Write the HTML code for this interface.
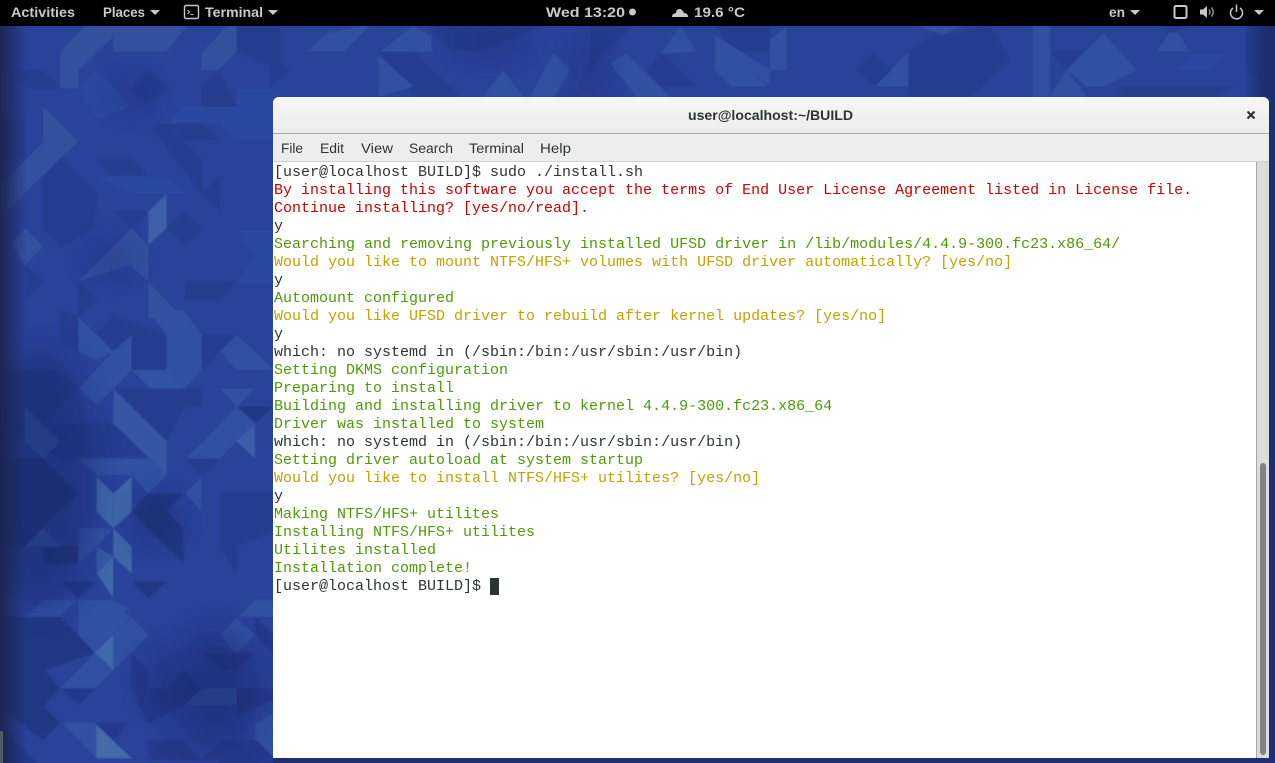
<!DOCTYPE html>
<html><head><meta charset="utf-8"><title>Terminal</title>
<style>
html,body{margin:0;padding:0;background:#000;}
#s{position:relative;width:1275px;height:763px;overflow:hidden;background:#000;}
svg{position:absolute;left:0;top:0;}
pre{position:absolute;left:274px;top:164px;margin:0;font:15px/18px "Liberation Mono",monospace;color:#2e3436;white-space:pre;}
.r{color:#cc0000}.g{color:#4e9a06}.y{color:#c4a000}
#win{position:absolute;left:273px;top:97px;width:996px;height:661px;background:#fff;border-radius:6px 6px 0 0;overflow:hidden;}
#tb{position:absolute;left:0;top:0;width:996px;height:36px;background:linear-gradient(#f6f6f6,#ededed);border-bottom:1px solid #a9a9a9;}
#mb{position:absolute;left:0;top:37px;width:996px;height:27px;background:#ededed;border-bottom:1px solid #cfcfcf;}
#sbb{position:absolute;left:983px;top:65px;width:1px;height:596px;background:#a8a8a8;}
#sb{position:absolute;left:984px;top:65px;width:12px;height:596px;background:#dcdcdc;}
#th{position:absolute;left:3px;top:301px;width:6px;height:292px;border-radius:3px;background:#808484;}
</style></head><body><div id="s">
<svg width="1275" height="763" viewBox="0 0 1275 763" xmlns="http://www.w3.org/2000/svg">
<defs>
<linearGradient id="lf" x1="0" x2="1" y1="0" y2="0"><stop offset="0" stop-color="#1b2650"/><stop offset="1" stop-color="#1b2650" stop-opacity="0"/></linearGradient>
<linearGradient id="rf" x1="0" x2="1" y1="0" y2="0"><stop offset="0" stop-color="#1e2d6e" stop-opacity="0"/><stop offset=".6" stop-color="#1e2d6e" stop-opacity=".9"/><stop offset="1" stop-color="#1e2d6e"/></linearGradient>
<filter id="b"><feGaussianBlur stdDeviation="14"/></filter>
<filter id="sf" x="-2%" y="-2%" width="104%" height="104%"><feGaussianBlur stdDeviation="0.7"/></filter>
</defs>
<rect x="0" y="26" width="1275" height="737" fill="#29429a"/>
<g opacity=".62" filter="url(#sf)">
<!-- left upper -->
<g transform="translate(0,20) scale(.33333)">
<g fill="#3a5aa4">
<polygon points="180,95 255,18 560,18 500,95 340,95 340,50 235,150 235,205 180,205"/>
<polygon points="0,500 130,365 180,415 50,545 0,600"/>
<polygon points="130,260 235,365 180,415 130,365"/>
<polygon points="605,100 680,18 710,18 710,95 655,150 605,150"/>
<polygon points="340,680 395,625 445,680 445,785 390,735 235,785"/>
<polygon points="445,785 550,895 445,895"/>
<polygon points="0,150 25,150 25,270 0,300"/>
<polygon points="30,670 75,625 130,680 75,735"/>
</g>
<g fill="#2f4ea6">
<polygon points="500,310 555,260 710,260 710,205 840,205 840,360 710,360 655,310"/>
<polygon points="710,630 840,630 840,790 710,790 760,710"/>
<polygon points="235,205 290,150 395,260 290,300"/>
<polygon points="290,470 500,470 555,520 395,520"/>
</g>
<g fill="#233a89">
<polygon points="290,415 395,415 445,468 340,468"/>
<polygon points="80,205 180,205 130,150 50,150"/>
<polygon points="605,205 655,150 710,260 605,260"/>
<polygon points="500,310 605,310 655,360 555,360"/>
<polygon points="500,625 555,575 605,625 555,675"/>
<polygon points="605,520 660,470 660,570"/>
<polygon points="710,18 840,18 840,150 710,95"/>
<polygon points="235,785 290,840 235,895"/>
<polygon points="75,735 130,785 75,840"/>
<polygon points="555,785 710,785 660,840 555,840"/>
<polygon points="395,205 445,150 500,205 445,255"/>
<polygon points="130,470 180,415 290,520 285,625 180,680 130,625"/>
<polygon points="345,575 445,575 395,625"/>
<polygon points="0,300 75,300 75,415 0,415"/>
<polygon points="455,320 500,310 605,420 605,520"/>
</g>
<g fill="#4a72b0"><polygon points="445,575 500,520 500,625 445,675"/></g>
<g fill="#2a429a"><polygon points="340,50 340,150 238,150"/></g>
</g>
<!-- left lower -->
<g transform="translate(0,310) scale(.33333)">
<g fill="#233a89">
<polygon points="0,180 180,180 235,235 130,340 235,340 340,340 445,445 180,445 75,395 0,395"/>
<polygon points="180,0 235,20 235,130 180,75"/>
<polygon points="340,20 500,75 500,180 395,180 340,125 290,70"/>
<polygon points="605,75 710,75 660,125 605,180"/>
<polygon points="555,290 605,290 605,235 445,235 340,235 500,395"/>
<polygon points="660,550 820,550 820,660 710,710 710,790 660,710"/>
<polygon points="555,445 660,445 605,500"/>
</g>
<g fill="#1f3278">
<polygon points="0,445 130,445 235,550 130,650 75,710 0,710"/>
<polygon points="395,605 445,550 550,550 500,605 550,655 550,760 445,655"/>
<polygon points="395,815 500,815 445,865"/>
<polygon points="180,815 285,815 235,865"/>
<polygon points="130,760 235,760 180,710"/>
<polygon points="710,290 820,290 765,340"/>
<polygon points="130,710 235,710 235,760 130,760"/>
</g>
<g fill="#385aa8">
<polygon points="445,0 550,0 605,75 500,75"/>
<polygon points="500,75 605,75 605,180 555,235 500,180"/>
<polygon points="660,125 710,75 765,125 820,180 710,180"/>
<polygon points="235,235 340,125 395,75 395,180 340,235 290,285"/>
<polygon points="75,290 180,395 130,445 75,395"/>
<polygon points="235,445 445,445 390,495 290,495"/>
<polygon points="395,495 445,445 500,495 445,550"/>
<polygon points="235,655 340,655 290,710 235,760"/>
<polygon points="660,235 765,235 710,290"/>
<polygon points="710,290 765,340 710,395 610,395"/>
<polygon points="555,445 610,395 710,395 660,445"/>
<polygon points="605,500 555,550 605,605"/>
<polygon points="75,710 130,655 180,710"/>
<polygon points="235,870 340,870 395,900 235,900"/>
<polygon points="235,20 340,125 290,150 235,125"/>
</g>
<g fill="#395fab"><polygon points="395,180 500,180 555,235 450,235"/></g>
<polygon points="340,235 500,395 500,495 340,340" fill="#3f63aa"/>
<polygon points="710,395 765,340 765,445" fill="#4a6fb2"/>
<g fill="#4f7db5">
<polygon points="290,500 340,550 290,605"/>
<polygon points="340,550 395,500 395,605 340,655"/>
<polygon points="290,605 340,550 340,655"/>
<polygon points="340,655 395,710 395,790 340,740"/>
<polygon points="340,740 290,790 340,865"/>
</g>
<polygon points="290,710 340,740 290,790" fill="#3f66ab"/>
</g>
<!-- bottom -->
<g transform="translate(0,600) scale(.33333)">
<polygon points="0,50 180,50 285,158 135,210 180,265 130,320 180,368 130,420 0,320" fill="#1f3278"/>
<g fill="#385aa8">
<polygon points="80,50 130,0 230,0 180,50"/>
<polygon points="235,0 340,0 390,50 340,105 235,105"/>
<polygon points="340,105 395,50 445,105 340,210"/>
<polygon points="660,105 710,55 765,105 710,160"/>
<polygon points="715,50 765,0 820,0 820,50"/>
<polygon points="185,368 285,368 340,470 290,475"/>
<polygon points="555,315 605,265 710,265 710,315"/>
<polygon points="765,370 820,340 820,470 765,420"/>
<polygon points="235,105 340,105 285,158"/>
<polygon points="235,210 285,158 340,210 285,265 180,265"/>
</g>
<polygon points="285,158 340,105 340,210" fill="#5080b8"/>
<polygon points="290,375 395,475 290,475" fill="#5a82b0"/>
<g fill="#213683">
<polygon points="180,265 285,265 235,315"/>
<polygon points="285,368 390,368 340,420"/>
<polygon points="395,160 445,210 445,370 395,270"/>
<polygon points="445,265 500,265 555,315 445,370"/>
<polygon points="610,160 760,160 710,210 660,210"/>
<polygon points="505,265 555,210 605,265 555,315"/>
<polygon points="445,420 550,420 600,480 445,480"/>
<polygon points="600,480 660,430 710,480"/>
<polygon points="660,420 770,420 820,470 820,510 660,510"/>
<polygon points="710,265 820,265 820,300 710,345"/>
<polygon points="0,370 130,510 0,510"/>
<polygon points="765,50 820,105 820,160 765,105"/>
</g>
</g>
<!-- top strip -->
<g transform="translate(270,20) scale(.33333)">
<g fill="#233a89">
<polygon points="330,95 430,95 570,230 430,230"/>
<polygon points="480,18 820,18 640,90 540,95"/>
<polygon points="170,45 220,95 115,95"/>
<polygon points="960,18 1090,18 1000,100 960,150"/>
<polygon points="1130,150 1175,100 1280,200 1175,200"/>
<polygon points="1340,18 1500,18 1500,95 1390,95"/>
<polygon points="0,100 60,150 0,200"/>
</g>
<g fill="#385aa8">
<polygon points="325,105 430,200 325,230"/>
<polygon points="110,95 170,40 270,18 300,18 220,95"/>
<polygon points="640,230 700,150 760,230"/>
<polygon points="850,100 900,150 855,230 780,230"/>
<polygon points="1020,130 1070,100 1200,230 1100,230"/>
<polygon points="1175,100 1230,18 1280,95"/>
<polygon points="1335,45 1500,150 1500,200 1440,150 1335,150"/>
<polygon points="1335,150 1440,150 1490,200 1385,200"/>
<polygon points="430,18 485,50 485,95 330,95"/>
</g>
</g>
<g transform="translate(770,20) scale(.33333)">
<g fill="#385aa8">
<polygon points="0,60 50,18 50,150 0,150"/>
<polygon points="315,200 415,95 415,200"/>
<polygon points="790,18 840,18 840,230 790,230"/>
<polygon points="890,150 1000,40 1100,150 1000,200 950,200"/>
<polygon points="1160,95 1260,95 1210,18"/>
<polygon points="840,230 890,150 950,230"/>
<polygon points="450,18 570,18 520,45"/>
</g>
<g fill="#233a89">
<polygon points="260,150 310,100 365,150 315,200"/>
<polygon points="415,95 480,50 660,18 720,120 600,230 415,230"/>
<polygon points="840,95 940,95 890,150"/>
<polygon points="1050,200 1390,200 1340,230 1050,230"/>
<polygon points="1430,18 1515,18 1515,230 1430,150"/>
<polygon points="1160,18 1260,18 1210,40"/>
</g>
<polygon points="1220,150 1265,100 1370,100 1320,150" fill="#2d4ca6"/>
</g>
</g>
<!-- soft folds and regional darkening -->
<g filter="url(#b)" fill="#16245f" opacity=".4">
<ellipse cx="130" cy="95" rx="18" ry="10"/>
<ellipse cx="110" cy="260" rx="22" ry="10"/>
<ellipse cx="40" cy="480" rx="55" ry="130"/>
<ellipse cx="155" cy="520" rx="22" ry="22"/>
<ellipse cx="160" cy="680" rx="12" ry="28"/>
<ellipse cx="215" cy="690" rx="45" ry="60"/>
<ellipse cx="590" cy="70" rx="10" ry="30"/>
<ellipse cx="490" cy="40" rx="35" ry="10"/>
</g>
<rect x="0" y="26" width="26" height="737" fill="url(#lf)"/>
<rect x="1245" y="26" width="30" height="737" fill="url(#rf)"/>
<rect x="0" y="731" width="3" height="32" fill="#555a66"/>
<rect x="273" y="758" width="1002" height="5" fill="#1e2f72"/>
<!-- top bar -->
<rect x="0" y="0" width="1275" height="26" fill="#000"/>
<g font-family="'Liberation Sans',sans-serif" font-weight="bold" font-size="13.5" fill="#c9c9c9">
<text x="11" y="17" textLength="64" lengthAdjust="spacingAndGlyphs">Activities</text>
<text x="103" y="17" textLength="42" lengthAdjust="spacingAndGlyphs">Places</text>
<text x="205" y="17" textLength="58" lengthAdjust="spacingAndGlyphs">Terminal</text>
<text x="546" y="17" textLength="79" lengthAdjust="spacingAndGlyphs">Wed 13:20</text>
<text x="694" y="17" textLength="51" lengthAdjust="spacingAndGlyphs">19.6 °C</text>
<text x="1109" y="17" textLength="16" lengthAdjust="spacingAndGlyphs">en</text>
</g>
<g fill="#c9c9c9">
<polygon points="150,10 160,10 155,15"/>
<polygon points="268,10 278,10 273,15"/>
<polygon points="1130,10 1140,10 1135,15"/>
<polygon points="1254,10 1264,10 1259,15"/>
<circle cx="632.5" cy="12" r="3.5"/>
<path d="M672,17 L688,17 Q688,13 684,13 Q682,8.500 679,9 Q676,9.500 676,13 Q672,13.500 672,17Z"/>
<path d="M1200,9.500h3l4,-3.500v12l-4,-3.500h-3z"/>
</g>
<rect x="184.500" y="5.500" width="14" height="13" rx="1.500" fill="none" stroke="#c9c9c9" stroke-width="1.400"/>
<path d="M187.500,10 l2,2 l-2,2 M190.500,14.500 h3" fill="none" stroke="#c9c9c9" stroke-width="1"/>
<rect x="1174.500" y="6" width="12" height="12" rx="1.500" fill="none" stroke="#c9c9c9" stroke-width="2"/>
<path d="M1209,9.500 Q1211,12 1209,14.500 M1211.500,7.500 Q1215,12 1211.500,16.500" fill="none" stroke="#8f8f8f" stroke-width="1.500"/>
<path d="M1233,8 A6,6 0 1 0 1240,8" fill="none" stroke="#c9c9c9" stroke-width="1.500"/>
<path d="M1236.500,4.500 V12" fill="none" stroke="#c9c9c9" stroke-width="1.500"/>
</svg>
<div id="win">
<div id="tb"></div><div id="mb"></div>
<div id="sbb"></div><div id="sb"><div id="th"></div></div>
</div>
<svg width="1275" height="763" viewBox="0 0 1275 763" xmlns="http://www.w3.org/2000/svg">
<text x="688" y="120" font-family="'Liberation Sans',sans-serif" font-weight="bold" font-size="13.5" fill="#2e3436" textLength="165" lengthAdjust="spacingAndGlyphs">user@localhost:~/BUILD</text>
<g font-family="'Liberation Sans',sans-serif" font-size="13.500" fill="#2e3436">
<text x="281" y="153" textLength="22" lengthAdjust="spacingAndGlyphs">File</text>
<text x="320" y="153" textLength="24" lengthAdjust="spacingAndGlyphs">Edit</text>
<text x="361" y="153" textLength="32" lengthAdjust="spacingAndGlyphs">View</text>
<text x="409" y="153" textLength="44" lengthAdjust="spacingAndGlyphs">Search</text>
<text x="469" y="153" textLength="55" lengthAdjust="spacingAndGlyphs">Terminal</text>
<text x="540" y="153" textLength="31" lengthAdjust="spacingAndGlyphs">Help</text>
</g>
<path d="M1247.500,111.500 L1254.500,118.500 M1254.500,111.500 L1247.500,118.500" stroke="#2e3436" stroke-width="2.200" fill="none"/>
<rect x="490" y="578" width="9" height="17" fill="#2e3436"/>
</svg>
<pre>[user@localhost BUILD]$ sudo ./install.sh
<span class="r">By installing this software you accept the terms of End User License Agreement listed in License file.</span>
<span class="r">Continue installing? [yes/no/read].</span>
y
<span class="g">Searching and removing previously installed UFSD driver in /lib/modules/4.4.9-300.fc23.x86_64/</span>
<span class="y">Would you like to mount NTFS/HFS+ volumes with UFSD driver automatically? [yes/no]</span>
y
<span class="g">Automount configured</span>
<span class="y">Would you like UFSD driver to rebuild after kernel updates? [yes/no]</span>
y
which: no systemd in (/sbin:/bin:/usr/sbin:/usr/bin)
<span class="g">Setting DKMS configuration</span>
<span class="g">Preparing to install</span>
<span class="g">Building and installing driver to kernel 4.4.9-300.fc23.x86_64</span>
<span class="g">Driver was installed to system</span>
which: no systemd in (/sbin:/bin:/usr/sbin:/usr/bin)
<span class="g">Setting driver autoload at system startup</span>
<span class="y">Would you like to install NTFS/HFS+ utilites? [yes/no]</span>
y
<span class="g">Making NTFS/HFS+ utilites</span>
<span class="g">Installing NTFS/HFS+ utilites</span>
<span class="g">Utilites installed</span>
<span class="g">Installation complete!</span>
[user@localhost BUILD]$ </pre>
</div></body></html>
